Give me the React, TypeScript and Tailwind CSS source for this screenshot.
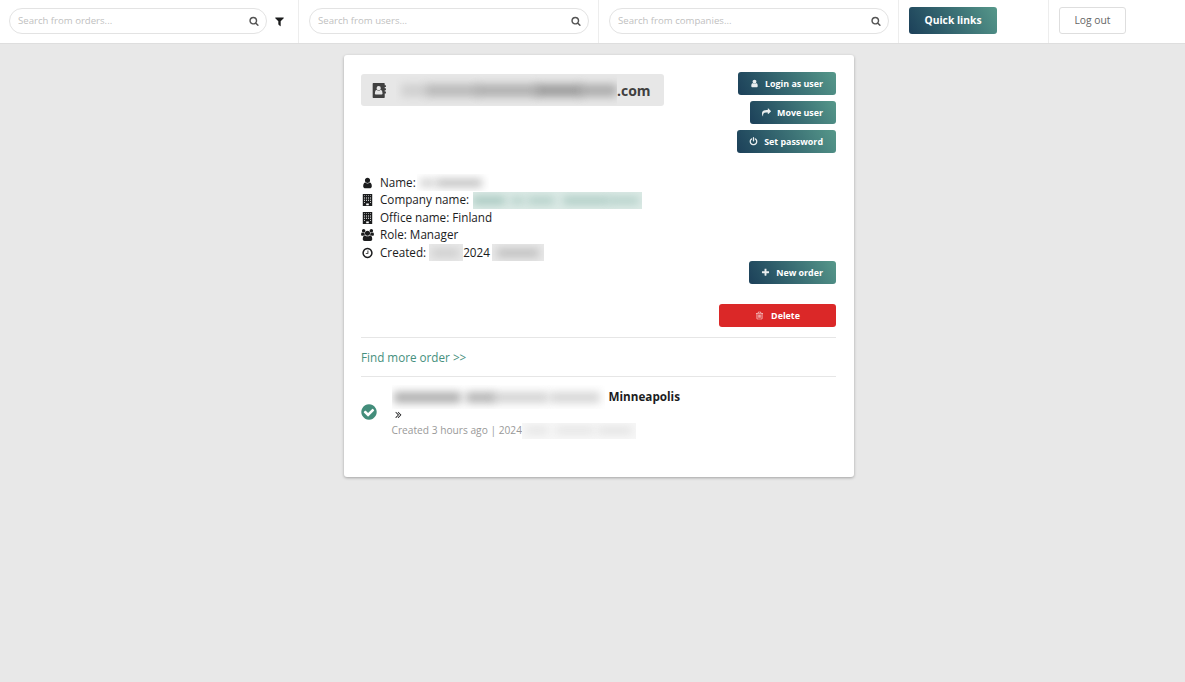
import type { ReactNode } from "react";

const PATHS = {
  search:
    "M1216 832q0-185-131.5-316.5t-316.5-131.5-316.5 131.5-131.5 316.5 131.5 316.5 316.5 131.5 316.5-131.5 131.5-316.5zm512 832q0 52-38 90t-90 38q-54 0-90-38l-343-342q-179 124-399 124-143 0-273.5-55.5t-225-150-150-225-55.5-273.5 55.5-273.5 150-225 225-150 273.5-55.5 273.5 55.5 225 150 150 225 55.5 273.5q0 220-124 399l343 343q37 37 37 90z",
  filter:
    "M1595 295q17 41-14 70l-493 493v742q0 42-39 59-13 5-25 5-27 0-45-19l-256-256q-19-19-19-45v-486l-493-493q-31-29-14-70 17-39 59-39h1280q42 0 59 39z",
  user:
    "M1536 1399q0 109-62.5 187t-150.5 78h-854q-88 0-150.5-78t-62.5-187q0-85 8.5-160.5t31.5-152 58.5-131 94-89 134.5-34.5q131 128 313 128t313-128q76 0 134.5 34.5t94 89 58.5 131 31.5 152 8.5 160.5zm-256-887q0 159-112.5 271.5t-271.5 112.5-271.5-112.5-112.5-271.5 112.5-271.5 271.5-112.5 271.5 112.5 112.5 271.5z",
  clock:
    "M1024 544v448q0 14-9 23t-23 9h-320q-14 0-23-9t-9-23v-64q0-14 9-23t23-9h224v-352q0-14 9-23t23-9h64q14 0 23 9t9 23zm416 352q0-148-73-273t-198-198-273-73-273 73-198 198-73 273 73 273 198 198 273 73 273-73 198-198 73-273zm224 0q0 209-103 385.5t-279.5 279.5-385.5 103-385.5-103-279.5-279.5-103-385.5 103-385.5 279.5-279.5 385.5-103 385.5 103 279.5 279.5 103 385.5z",
  power:
    "M1664 896q0 156-61 298t-164 245-245 164-298 61-298-61-245-164-164-245-61-298q0-182 80.5-343t226.5-270q43-32 95.5-25t83.5 50q32 42 24.5 94.5t-49.5 84.5q-98 74-151.5 181t-53.5 228q0 104 40.5 198.5t109.5 163.5 163.5 109.5 198.5 40.5 198.5-40.5 163.5-109.5 109.5-163.5 40.5-198.5q0-121-53.5-228t-151.5-181q-42-32-49.5-84.5t24.5-94.5q31-43 84-50t95 25q146 109 226.5 270t80.5 343zm-640-768v640q0 52-38 90t-90 38-90-38-38-90v-640q0-52 38-90t90-38 90 38 38 90z",
  plus:
    "M1600 736v192q0 40-28 68t-68 28h-416v416q0 40-28 68t-68 28h-192q-40 0-68-28t-28-68v-416h-416q-40 0-68-28t-28-68v-192q0-40 28-68t68-28h416v-416q0-40 28-68t68-28h192q40 0 68 28t28 68v416h416q40 0 68 28t28 68z",
  check:
    "M1412 734q0-28-18-46l-91-90q-19-19-45-19t-45 19l-408 407-226-226q-19-19-45-19t-45 19l-91 90q-18 18-18 46 0 27 18 45l362 362q19 19 45 19 27 0 46-19l543-543q18-18 18-45zm252 162q0 209-103 385.5t-279.5 279.5-385.5 103-385.5-103-279.5-279.5-103-385.5 103-385.5 279.5-279.5 385.5-103 385.5 103 279.5 279.5 103 385.5z",
  share:
    "M1792 640q0 26-19 45l-512 512q-19 19-45 19t-45-19-19-45v-256h-224q-98 0-175.5 6t-154 21.5-133 42.5-105.5 69.5-80 101-48.5 138.5-17.5 181q0 55 5 123 0 6 2.5 23.5t2.5 26.5q0 15-8.5 25t-23.5 10q-16 0-28-17-7-9-13-22t-13.5-30-10.5-24q-127-285-127-451 0-199 53-333 162-403 875-403h224v-256q0-26 19-45t45-19 45 19l512 512q19 19 19 45z",
  trash:
    "M704 736v576q0 14-9 23t-23 9h-64q-14 0-23-9t-9-23v-576q0-14 9-23t23-9h64q14 0 23 9t9 23zm256 0v576q0 14-9 23t-23 9h-64q-14 0-23-9t-9-23v-576q0-14 9-23t23-9h64q14 0 23 9t9 23zm256 0v576q0 14-9 23t-23 9h-64q-14 0-23-9t-9-23v-576q0-14 9-23t23-9h64q14 0 23 9t9 23zm128 724v-948h-896v948q0 22 7 40.5t14.5 27 10.5 8.5h832q3 0 10.5-8.5t14.5-27 7-40.5zm-672-1076h448l-48-117q-7-9-17-11h-317q-10 2-17 11zm928 32v64q0 14-9 23t-23 9h-96v948q0 83-47 143.5t-113 60.5h-832q-66 0-113-58.5t-47-141.5v-952h-96q-14 0-23-9t-9-23v-64q0-14 9-23t23-9h309l70-167q15-37 54-63t79-26h320q40 0 79 26t54 63l70 167h309q14 0 23 9t9 23z",
  users:
    "M593 896q-162 5-265 128h-134q-82 0-138-40.5t-56-118.5q0-353 124-353 6 0 43.5 21t97.5 42.5 119 21.5q67 0 133-23-5 37-5 66 0 139 81 256zm1071 637q0 120-73 189.5t-194 69.5h-874q-121 0-194-69.5t-73-189.5q0-53 3.5-103.5t14-109 26.5-108.5 43-97.5 62-81 85.5-53.5 111.5-20q10 0 43 21.5t73 48 107 48 135 21.5 135-21.5 107-48 73-48 43-21.5q61 0 111.5 20t85.5 53.5 62 81 43 97.5 26.5 108.5 14 109 3.5 103.5zm-1024-1277q0 106-75 181t-181 75-181-75-75-181 75-181 181-75 181 75 75 181zm704 384q0 159-112.5 271.5t-271.5 112.5-271.5-112.5-112.5-271.5 112.5-271.5 271.5-112.5 271.5 112.5 112.5 271.5zm576 225q0 78-56 118.5t-138 40.5h-134q-103-123-265-128 81-117 81-256 0-29-5-66 66 23 133 23 59 0 119-21.5t97.5-42.5 43.5-21q124 0 124 353zm-128-609q0 106-75 181t-181 75-181-75-75-181 75-181 181-75 181 75 75 181z",
  chevrons:
    "M979 960q0 13-10 23l-466 466q-10 10-23 10t-23-10l-50-50q-10-10-10-23t10-23l393-393-393-393q-10-10-10-23t10-23l50-50q10-10 23-10t23 10l466 466q10 10 10 23zm384 0q0 13-10 23l-466 466q-10 10-23 10t-23-10l-50-50q-10-10-10-23t10-23l393-393-393-393q-10-10-10-23t10-23l50-50q10-10 23-10t23 10l466 466q10 10 10 23z",
  building:
    "M192 0h1408v1792h-1408z M370 170v90h150v-90z M370 430v90h150v-90z M370 690v90h150v-90z M370 950v90h150v-90z M370 1210v90h150v-90z M670 170v90h150v-90z M670 430v90h150v-90z M670 690v90h150v-90z M670 950v90h150v-90z M970 170v90h150v-90z M970 430v90h150v-90z M970 690v90h150v-90z M970 950v90h150v-90z M1270 170v90h150v-90z M1270 430v90h150v-90z M1270 690v90h150v-90z M1270 950v90h150v-90z M1270 1210v90h150v-90z M700 1400h390v270h-390z",
  book:
    "M160 0h1280q80 0 80 80v176h112q32 0 32 32v160q0 32-32 32h-112v160h112q32 0 32 32v160q0 32-32 32h-112v160h112q32 0 32 32v160q0 32-32 32h-112v464q0 80-80 80h-1280q-80 0-80-80v-1632q0-80 80-80z M800 370a255 255 0 1 0 0 510a255 255 0 1 0 0-510z M570 820q-230 50-230 420q0 120 120 120h680q120 0 120-120q0-370-230-420q-90 110-230 110t-230-110z",
};

type IconName = keyof typeof PATHS;

function Icon({ name, className = "" }: { name: IconName; className?: string }) {
  return (
    <svg
      viewBox={name === "users" ? "0 0 1920 1792" : "0 0 1792 1792"}
      fill="currentColor"
      className={"shrink-0 " + className}
      aria-hidden="true"
    >
      <path fillRule={name === "building" || name === "book" ? "evenodd" : "nonzero"} d={PATHS[name]} />
    </svg>
  );
}

function SearchCell({ placeholder, filter = false }: { placeholder: string; filter?: boolean }) {
  return (
    <div className="flex w-[300px] shrink-0 items-center border-r border-[#ededed] pr-[9px] pb-px pl-[10px] first:w-[299px] first:pl-[9px]">
      <label className="flex h-[26px] flex-1 items-center rounded-full border border-[#e3e3e3] pr-[7px] pl-[8px]">
        <input
          placeholder={placeholder}
          className="w-0 flex-1 bg-transparent text-[9.6px] outline-none placeholder:text-[#bfbfbf]"
        />
        <Icon name="search" className="size-[10px] text-[#555]" />
      </label>
      {filter && <Icon name="filter" className="mt-px mr-[4px] ml-[7px] size-[11px] text-[#1b1c1d]" />}
    </div>
  );
}

function ActionButton({ icon, className = "", children }: { icon: IconName; className?: string; children: ReactNode }) {
  return (
    <button
      className={
        "flex h-[23px] items-center justify-between whitespace-nowrap rounded-[3px] bg-linear-60 from-[#1c4059] to-[#56988a] pr-[13px] pl-[12px] text-[8.9px] font-bold text-white " +
        className
      }
    >
      <Icon name={icon} className="size-[9px] opacity-90" />
      {children}
    </button>
  );
}

function InfoRow({ icon, children }: { icon: IconName; children: ReactNode }) {
  return (
    <li className="flex h-[17.5px] items-center">
      <Icon name={icon} className="mr-[6px] h-[12px] w-[13px]" />
      {children}
    </li>
  );
}

/* Redacted value: soft ink patches, given as [left, width, opacity], clipped to a box. */
function Redacted({ className, ink, marks }: { className: string; ink: string; marks: [number, number, number][] }) {
  return (
    <span className={"relative inline-block shrink-0 overflow-hidden " + className} aria-hidden="true">
      {marks.map(([left, width, opacity], i) => (
        <span key={i} className={"absolute top-[30%] h-[44%] blur-[4px] " + ink} style={{ left, width, opacity }} />
      ))}
    </span>
  );
}

export default function App() {
  return (
    <div className="flex min-h-screen flex-col bg-[#e8e8e8] font-['Open_Sans',sans-serif] text-[#1b1c1d]">
      <header className="flex h-[44px] border-b border-[#dedede] bg-white">
        <SearchCell placeholder="Search from orders..." filter />
        <SearchCell placeholder="Search from users..." />
        <SearchCell placeholder="Search from companies..." />
        <div className="flex w-[150px] shrink-0 items-start border-r border-[#ededed] pt-[7px] pl-[10px]">
          <button className="h-[27px] w-[88px] rounded-[3px] bg-linear-60 from-[#1c4059] to-[#56988a] text-[10.3px] font-bold text-white">
            Quick links
          </button>
        </div>
        <div className="flex items-start pt-[7px] pl-[10px]">
          <button className="h-[27px] w-[67px] rounded-[3px] border border-[#dedede] text-[10.3px] text-[#666]">Log out</button>
        </div>
      </header>

      <main className="mt-[11px] ml-[343.5px] h-[421.5px] w-[510.5px] rounded-[3px] bg-white pr-[18px] pl-[17.5px] pt-[17px] shadow-[0_1px_3px_rgba(0,0,0,0.3)]">
        <div className="flex h-[102px] items-start justify-between">
          <h1 className="mt-[2px] flex h-[32px] w-[302.5px] items-center rounded-[3px] bg-[#e7e7e7] pl-[11px] text-[14px] font-bold text-[#404040]">
            <Icon name="book" className="mr-[9px] size-[15px]" />
            <Redacted
              className="h-[30px] w-[221px]"
              ink="bg-[#777]"
              marks={[
                [5, 26, 0.2],
                [30, 52, 0.4],
                [80, 62, 0.48],
                [140, 46, 0.65],
                [184, 37, 0.5],
              ]}
            />
            .com
          </h1>
          <div className="flex flex-col items-end gap-[6px]">
            <ActionButton icon="user" className="w-[98px]">
              Login as user
            </ActionButton>
            <ActionButton icon="share" className="w-[86px]">
              Move user
            </ActionButton>
            <ActionButton icon="power" className="w-[99px]">
              Set password
            </ActionButton>
          </div>
        </div>

        <ul className="h-[87px] text-[11.7px]">
          <InfoRow icon="user">
            Name:
            <Redacted
              className="ml-px h-[17px] w-[72px]"
              ink="bg-[#888]"
              marks={[
                [3, 14, 0.4],
                [19, 46, 0.55],
              ]}
            />
          </InfoRow>
          <InfoRow icon="building">
            Company name:
            <Redacted
              className="ml-[4px] h-[17px] w-[169px] bg-[#dceae6]"
              ink="bg-[#78aa9d]"
              marks={[
                [0, 32, 0.6],
                [38, 13, 0.4],
                [55, 26, 0.45],
                [90, 46, 0.5],
                [136, 30, 0.42],
              ]}
            />
          </InfoRow>
          <InfoRow icon="building">Office name: Finland</InfoRow>
          <InfoRow icon="users">Role: Manager</InfoRow>
          <InfoRow icon="clock">
            Created:
            <Redacted className="ml-[3px] h-[17px] w-[34px] bg-[#e8e8e8]" ink="bg-[#999]" marks={[[3, 27, 0.35]]} />
            2024
            <Redacted className="ml-[2px] h-[17px] w-[52px] bg-[#e8e8e8]" ink="bg-[#888]" marks={[[5, 42, 0.45]]} />
          </InfoRow>
        </ul>

        <div className="flex flex-col items-end">
          <ActionButton icon="plus" className="w-[87px]">
            New order
          </ActionButton>
          <button className="mt-[20px] flex h-[23px] w-[117px] items-center justify-center rounded-[3px] bg-[#db2828] text-[8.9px] font-bold text-white">
            <Icon name="trash" className="mr-[7px] size-[9px] opacity-90" />
            Delete
          </button>
        </div>

        <div className="mt-[10px] flex h-[40px] items-center border-y border-[#e6e6e6] pt-px text-[11.7px] text-[#46907d]">
          <a href="#orders">Find more order &gt;&gt;</a>
        </div>

        <div className="flex items-center pt-[8px]">
          <Icon name="check" className="mr-[14px] -ml-[1.5px] size-[18px] text-[#438d7b]" />
          <div>
            <div className="flex h-[24px] items-center text-[11.7px] font-bold">
              <Redacted
                className="h-[24px] w-[213px]"
                ink="bg-[#777]"
                marks={[
                  [2, 67, 0.6],
                  [74, 28, 0.55],
                  [100, 56, 0.32],
                  [158, 50, 0.3],
                ]}
              />
              <span className="ml-[4px]">Minneapolis</span>
            </div>
            <Icon name="chevrons" className="h-[11px] w-[13px]" />
            <p className="mt-[2px] flex h-[17px] items-center text-[10.2px] text-[#999]">
              Created 3 hours ago | 2024
              <Redacted
                className="h-[16px] w-[114px] bg-[#f7f7f7]"
                ink="bg-[#aaa]"
                marks={[
                  [4, 22, 0.25],
                  [34, 38, 0.25],
                  [76, 34, 0.28],
                ]}
              />
            </p>
          </div>
        </div>
      </main>
    </div>
  );
}
